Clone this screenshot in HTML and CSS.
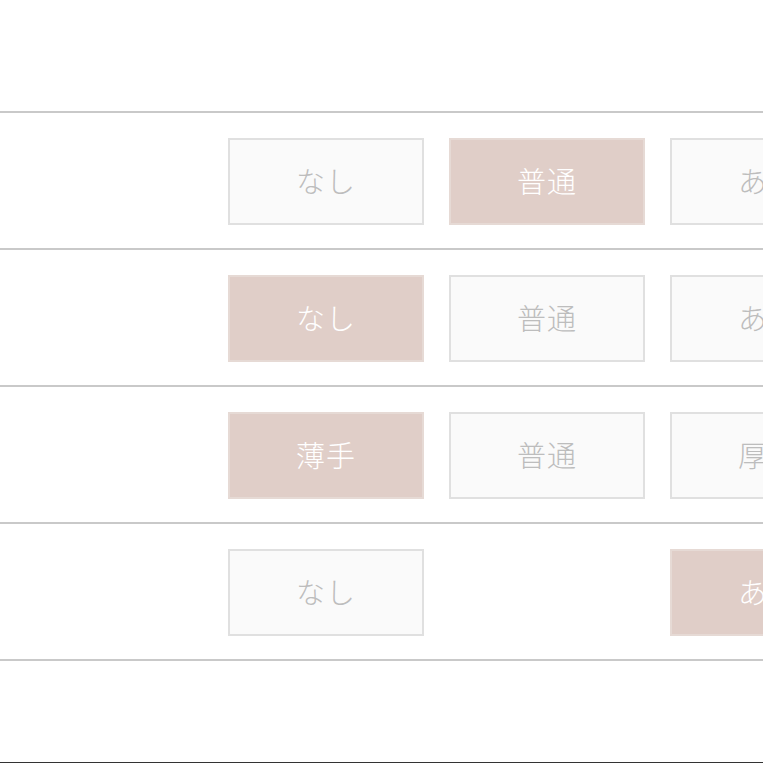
FILE: index.html
```html
<!DOCTYPE html>
<html lang="ja">
<head>
<meta charset="utf-8">
<link rel="stylesheet" href="styles.css">
</head>
<body>
<div class="page">
  <div class="table">
    <div class="row">
      <div class="label"></div>
      <div class="opt">なし</div>
      <div class="opt on">普通</div>
      <div class="opt">あり</div>
    </div>
    <div class="row">
      <div class="label"></div>
      <div class="opt on">なし</div>
      <div class="opt">普通</div>
      <div class="opt">あり</div>
    </div>
    <div class="row">
      <div class="label"></div>
      <div class="opt on">薄手</div>
      <div class="opt">普通</div>
      <div class="opt">厚手</div>
    </div>
    <div class="row">
      <div class="label"></div>
      <div class="opt">なし</div>
      <div class="empty"></div>
      <div class="opt on">あり</div>
    </div>
  </div>
  <div class="footer"></div>
</div>
</body>
</html>
```

FILE: styles.css
```css
html, body {
  margin: 0;
  padding: 0;
  background: #ffffff;
  overflow: hidden;
}
.page {
  width: 763px;
  height: 763px;
  overflow: hidden;
  font-family: "Noto Sans CJK JP", "Noto Sans", sans-serif;
}
.table {
  margin-top: 111px;
  border-bottom: 2px solid #c9c9c9;
}
.row {
  display: grid;
  grid-template-columns: 203px 196px 196px 196px;
  column-gap: 25px;
  padding: 25px 0 23px;
  border-top: 2px solid #c9c9c9;
}
.opt {
  box-sizing: border-box;
  height: 87px;
  padding-bottom: 4px;
  border: 2px solid #e0e0e0;
  background: #fafafa;
  color: #bdbdbd;
  font-size: 29px;
  font-weight: 300;
  letter-spacing: 1px;
  display: flex;
  align-items: center;
  justify-content: center;
}
.opt.on {
  background: #e0cec8;
  border-color: #e6dad5;
  color: #ffffff;
}
.footer {
  height: 101px;
  border-bottom: 1px solid #333333;
}
```
